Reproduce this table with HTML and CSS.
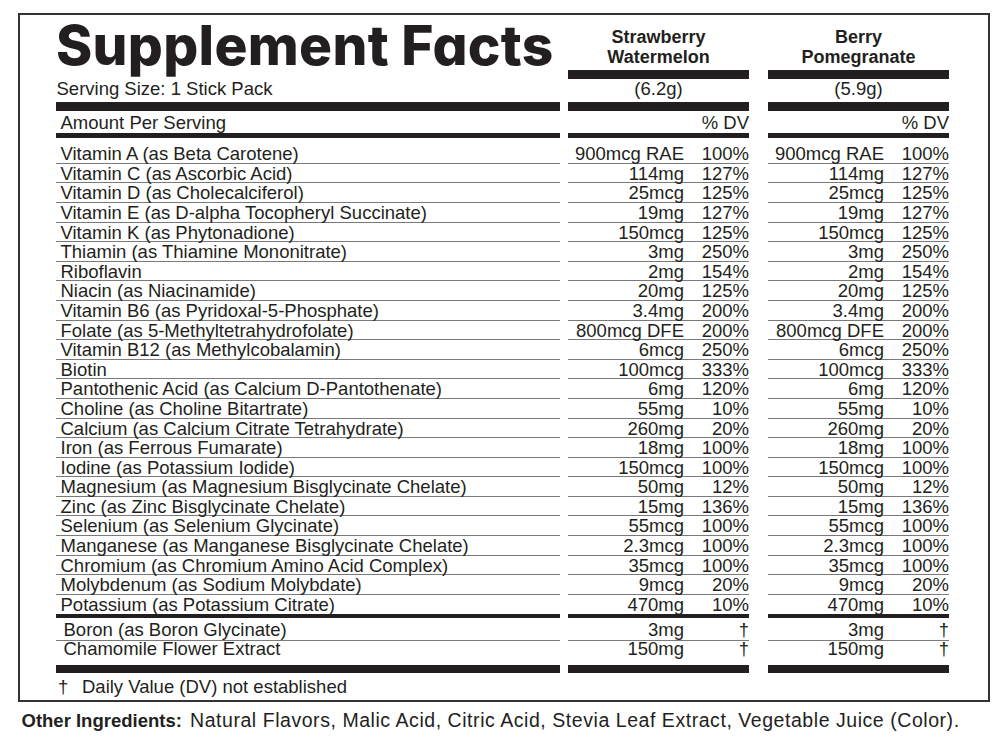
FILE: index.html
```html
<!DOCTYPE html>
<html lang="en">
<head>
<meta charset="utf-8">
<title>Supplement Facts</title>
<link rel="stylesheet" href="styles.css">
</head>
<body>
<div class="label">
  <div class="row head">
    <div class="cell lab"><h1 class="title">Supplement Facts</h1></div>
    <div class="cell col flavor">Strawberry<br>Watermelon</div>
    <div class="cell col flavor">Berry<br>Pomegranate</div>
  </div>
  <div class="row serving">
    <div class="cell lab">Serving Size: 1 Stick Pack</div>
    <div class="cell col center">(6.2g)</div>
    <div class="cell col center">(5.9g)</div>
  </div>
  <div class="row amount">
    <div class="cell lab">Amount Per Serving</div>
    <div class="cell col right">% DV</div>
    <div class="cell col right">% DV</div>
  </div>
  <div class="nutrients">
    <div class="row n"><div class="cell lab">Vitamin A (as Beta Carotene)</div><div class="cell col"><span class="amt">900mcg RAE</span><span class="dv">100%</span></div><div class="cell col"><span class="amt">900mcg RAE</span><span class="dv">100%</span></div></div>
    <div class="row n"><div class="cell lab">Vitamin C (as Ascorbic Acid)</div><div class="cell col"><span class="amt">114mg</span><span class="dv">127%</span></div><div class="cell col"><span class="amt">114mg</span><span class="dv">127%</span></div></div>
    <div class="row n"><div class="cell lab">Vitamin D (as Cholecalciferol)</div><div class="cell col"><span class="amt">25mcg</span><span class="dv">125%</span></div><div class="cell col"><span class="amt">25mcg</span><span class="dv">125%</span></div></div>
    <div class="row n"><div class="cell lab">Vitamin E (as D-alpha Tocopheryl Succinate)</div><div class="cell col"><span class="amt">19mg</span><span class="dv">127%</span></div><div class="cell col"><span class="amt">19mg</span><span class="dv">127%</span></div></div>
    <div class="row n"><div class="cell lab">Vitamin K (as Phytonadione)</div><div class="cell col"><span class="amt">150mcg</span><span class="dv">125%</span></div><div class="cell col"><span class="amt">150mcg</span><span class="dv">125%</span></div></div>
    <div class="row n"><div class="cell lab">Thiamin (as Thiamine Mononitrate)</div><div class="cell col"><span class="amt">3mg</span><span class="dv">250%</span></div><div class="cell col"><span class="amt">3mg</span><span class="dv">250%</span></div></div>
    <div class="row n"><div class="cell lab">Riboflavin</div><div class="cell col"><span class="amt">2mg</span><span class="dv">154%</span></div><div class="cell col"><span class="amt">2mg</span><span class="dv">154%</span></div></div>
    <div class="row n"><div class="cell lab">Niacin (as Niacinamide)</div><div class="cell col"><span class="amt">20mg</span><span class="dv">125%</span></div><div class="cell col"><span class="amt">20mg</span><span class="dv">125%</span></div></div>
    <div class="row n"><div class="cell lab">Vitamin B6 (as Pyridoxal-5-Phosphate)</div><div class="cell col"><span class="amt">3.4mg</span><span class="dv">200%</span></div><div class="cell col"><span class="amt">3.4mg</span><span class="dv">200%</span></div></div>
    <div class="row n"><div class="cell lab">Folate (as 5-Methyltetrahydrofolate)</div><div class="cell col"><span class="amt">800mcg DFE</span><span class="dv">200%</span></div><div class="cell col"><span class="amt">800mcg DFE</span><span class="dv">200%</span></div></div>
    <div class="row n"><div class="cell lab">Vitamin B12 (as Methylcobalamin)</div><div class="cell col"><span class="amt">6mcg</span><span class="dv">250%</span></div><div class="cell col"><span class="amt">6mcg</span><span class="dv">250%</span></div></div>
    <div class="row n"><div class="cell lab">Biotin</div><div class="cell col"><span class="amt">100mcg</span><span class="dv">333%</span></div><div class="cell col"><span class="amt">100mcg</span><span class="dv">333%</span></div></div>
    <div class="row n"><div class="cell lab">Pantothenic Acid (as Calcium D-Pantothenate)</div><div class="cell col"><span class="amt">6mg</span><span class="dv">120%</span></div><div class="cell col"><span class="amt">6mg</span><span class="dv">120%</span></div></div>
    <div class="row n"><div class="cell lab">Choline (as Choline Bitartrate)</div><div class="cell col"><span class="amt">55mg</span><span class="dv">10%</span></div><div class="cell col"><span class="amt">55mg</span><span class="dv">10%</span></div></div>
    <div class="row n"><div class="cell lab">Calcium (as Calcium Citrate Tetrahydrate)</div><div class="cell col"><span class="amt">260mg</span><span class="dv">20%</span></div><div class="cell col"><span class="amt">260mg</span><span class="dv">20%</span></div></div>
    <div class="row n"><div class="cell lab">Iron (as Ferrous Fumarate)</div><div class="cell col"><span class="amt">18mg</span><span class="dv">100%</span></div><div class="cell col"><span class="amt">18mg</span><span class="dv">100%</span></div></div>
    <div class="row n"><div class="cell lab">Iodine (as Potassium Iodide)</div><div class="cell col"><span class="amt">150mcg</span><span class="dv">100%</span></div><div class="cell col"><span class="amt">150mcg</span><span class="dv">100%</span></div></div>
    <div class="row n"><div class="cell lab">Magnesium (as Magnesium Bisglycinate Chelate)</div><div class="cell col"><span class="amt">50mg</span><span class="dv">12%</span></div><div class="cell col"><span class="amt">50mg</span><span class="dv">12%</span></div></div>
    <div class="row n"><div class="cell lab">Zinc (as Zinc Bisglycinate Chelate)</div><div class="cell col"><span class="amt">15mg</span><span class="dv">136%</span></div><div class="cell col"><span class="amt">15mg</span><span class="dv">136%</span></div></div>
    <div class="row n"><div class="cell lab">Selenium (as Selenium Glycinate)</div><div class="cell col"><span class="amt">55mcg</span><span class="dv">100%</span></div><div class="cell col"><span class="amt">55mcg</span><span class="dv">100%</span></div></div>
    <div class="row n"><div class="cell lab">Manganese (as Manganese Bisglycinate Chelate)</div><div class="cell col"><span class="amt">2.3mcg</span><span class="dv">100%</span></div><div class="cell col"><span class="amt">2.3mcg</span><span class="dv">100%</span></div></div>
    <div class="row n"><div class="cell lab">Chromium (as Chromium Amino Acid Complex)</div><div class="cell col"><span class="amt">35mcg</span><span class="dv">100%</span></div><div class="cell col"><span class="amt">35mcg</span><span class="dv">100%</span></div></div>
    <div class="row n"><div class="cell lab">Molybdenum (as Sodium Molybdate)</div><div class="cell col"><span class="amt">9mcg</span><span class="dv">20%</span></div><div class="cell col"><span class="amt">9mcg</span><span class="dv">20%</span></div></div>
    <div class="row n last"><div class="cell lab">Potassium (as Potassium Citrate)</div><div class="cell col"><span class="amt">470mg</span><span class="dv">10%</span></div><div class="cell col"><span class="amt">470mg</span><span class="dv">10%</span></div></div>
  </div>
  <div class="row extra boron"><div class="cell lab">Boron (as Boron Glycinate)</div><div class="cell col"><span class="amt">3mg</span><span class="dv">†</span></div><div class="cell col"><span class="amt">3mg</span><span class="dv">†</span></div></div>
  <div class="row extra chamomile"><div class="cell lab">Chamomile Flower Extract</div><div class="cell col"><span class="amt">150mg</span><span class="dv">†</span></div><div class="cell col"><span class="amt">150mg</span><span class="dv">†</span></div></div>
  <div class="footnote"><span class="dagger">†</span>Daily Value (DV) not established</div>
</div>
<p class="other"><strong>Other Ingredients:</strong> <span class="list">Natural Flavors, Malic Acid, Citric Acid, Stevia Leaf Extract, Vegetable Juice (Color).</span></p>
</body>
</html>
```

FILE: styles.css
```css
html, body {
  margin: 0;
  padding: 0;
  background: #ffffff;
}

body {
  font-family: "Liberation Sans", Arial, sans-serif;
  font-size: 18.5px;
  color: #231f20;
}

.label {
  margin: 13px 0 0 18px;
  width: 972px;
  box-sizing: border-box;
  border: 2px solid #333333;
  padding: 0 39px 0 36px;
}

.row {
  display: flex;
}

.cell {
  box-sizing: border-box;
}

.lab {
  width: 504px;
  padding-left: 4.5px;
}

.col {
  width: 181px;
  margin-left: 8px;
  display: flex;
}

.col + .col {
  margin-left: 19px;
}

/* Header */
.head {
  height: 64px;
}

.head .lab {
  padding-left: 0;
}

.title {
  margin: 0;
  padding-top: 10px;
  font-family: Inter, "Liberation Sans", sans-serif;
  font-weight: 800;
  font-size: 55px;
  line-height: 40px;
  letter-spacing: 0.3px;
  font-feature-settings: "cv11" 1;
  white-space: nowrap;
  color: #231f20;
}

.flavor {
  height: 64px;
  border-bottom: 9px solid #231f20;
  padding-top: 11.5px;
  font-weight: bold;
  font-size: 18px;
  line-height: 20.5px;
  justify-content: center;
  text-align: center;
}

.serving .cell {
  height: 32px;
  border-bottom: 9px solid #231f20;
  padding-top: 1px;
  line-height: 17.6px;
}

.serving .lab {
  padding-left: 0.5px;
}

.center {
  justify-content: center;
}

.right {
  justify-content: flex-end;
}

.amount .cell {
  height: 27px;
  border-bottom: 5px solid #231f20;
  padding-top: 3px;
  line-height: 17.6px;
}

/* Nutrient rows */
.nutrients {
  padding-top: 6.2px;
}

.n .cell {
  height: 19.6px;
  border-bottom: 1px solid #7a7a7a;
  padding-top: 1px;
  line-height: 17.6px;
  white-space: nowrap;
}

.n.last .cell {
  height: 23.1px;
  border-bottom: 4.5px solid #231f20;
}

.amt {
  width: 116px;
  text-align: right;
}

.dv {
  width: 65px;
  text-align: right;
}

.extra .lab {
  padding-left: 7.5px;
}

.boron .cell {
  height: 23.4px;
  border-bottom: 1px solid #7a7a7a;
  padding-top: 3.4px;
  line-height: 17.6px;
}

.chamomile .cell {
  height: 32px;
  border-bottom: 8.5px solid #231f20;
  line-height: 16.5px;
}

.footnote {
  height: 26.5px;
  box-sizing: border-box;
  padding: 4.3px 0 0 2px;
  line-height: 17.6px;
}

.dagger {
  display: inline-block;
  width: 24px;
}

.other {
  margin: 7.8px 0 0 21.5px;
  line-height: 21px;
  white-space: nowrap;
}

.other strong {
  font-weight: bold;
  margin-right: 3px;
}

.other .list {
  font-size: 19.5px;
  letter-spacing: 0.55px;
}
```
